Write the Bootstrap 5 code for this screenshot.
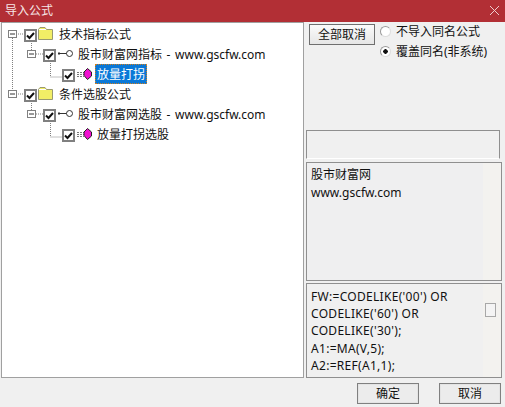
<!DOCTYPE html>
<html lang="zh"><head><meta charset="utf-8"><title>导入公式</title>
<link href="https://cdn.jsdelivr.net/npm/bootstrap@5.3.0/dist/css/bootstrap.min.css" rel="stylesheet">
<style>
html,body{height:100%;overflow:hidden}
body{background:#f0f0f0;color:#111;font:12px/18px "Noto Sans","Noto Sans CJK SC",sans-serif}
.dlg{width:505px;height:407px}
.ttl{height:22px;background:#b22f35;color:#f6e6e6;padding:0 5px}
.ttl-x{width:9px;height:9px;margin:0 1px 2px 0}
.mainrow{height:356px;padding-left:1px}
.treebox{width:303px;background:#fff;border:1px solid #a0a0a0;position:relative;padding-top:1px}
.lines{position:absolute;left:-1px;top:-23px;width:303px;height:355px;pointer-events:none}
.trow{height:20px}
.trow.l0{padding-left:22px}.trow.l1{padding-left:41px}.trow.l2{padding-left:60px}
.cb{width:13px;height:13px;border:2px solid #808080;background:#fff;flex:none;position:relative;top:5px}
.cb svg{display:block;width:9px;height:9px}
.ic{flex:none;margin-left:2px}
.ic-f{margin-top:3px;margin-left:1px}
.ic-k{margin-top:5px}
.ic-g{margin-top:4px}
.tx{white-space:nowrap;padding:0 2px;height:20px;line-height:22px;margin-left:3px;word-spacing:1.5px}
.tx.l0t{margin-left:4px}.tx.l1t{margin-left:3px}
.tx.sel{background:#0a78d7;color:#fff;outline:1px dotted #d08020;outline-offset:-1px}
.side{width:199px;padding:2px 1px 0 2px}
.btnall.btn{width:66px;height:21px;padding:0;border:1px solid #6f6f6f;border-radius:0;background:linear-gradient(#fafafa,#e6e6e6);font-size:12px;line-height:18px;color:#111;margin-left:3px}
.opts{margin-left:5px;margin-top:-2px}
.opt{height:20px}
.rd{width:11px;height:11px;border-radius:50%;background:#fff;border:1px solid #9a9a9a;border-right-color:#ddd;border-bottom-color:#ddd;margin-right:5px;flex:none;position:relative;top:-1px}
.rd.on{background:radial-gradient(circle,#111 0 2px,#fff 2.5px)}
.topz{height:103px}
.pane{border:1px solid #8f8f8f;background:#f0f0f0;position:relative}
.p1{height:29px;margin:3px 2px 3px 0;border-bottom-color:#fff}
.p2{height:119px;padding:3px 4px;background:linear-gradient(90deg,#efeff0 0 176px,#f3f2ef 176px)}
.p3{height:95px;margin-top:2px;padding:4px 4px;line-height:17.2px;letter-spacing:.3px;background:linear-gradient(90deg,#f0f0f0 0 176px,#f3f2ef 176px)}
.thumb{position:absolute;left:178px;top:19px;width:11px;height:14px;border:1px solid #a8a8a8;background:#f4f4f4}
.foot{height:29px;padding:5px 4px 0 0;gap:20px}
.foot .btn{width:62px;height:21px;padding:0;border-radius:0;border:1px solid #808080;background:#ececec;box-shadow:inset 0 0 0 1px #e4e4e4;font-size:12px;line-height:18px;color:#111}
</style></head><body>
<svg width="0" height="0" class="position-absolute">
<defs>
<symbol id="chk" viewBox="0 0 9 9"><path d="M1 4.500 3.500 7 8 2" fill="none" stroke="#111" stroke-width="2"/></symbol>
<symbol id="fold" viewBox="0 0 15 13"><path d="M.5 12.500V2.500L2 .5H7L8.500 2.500H14.500V12.500Z" fill="#f2ee66" stroke="#9a9a70"/><path d="M1 2.500H8" stroke="#fff"/></symbol>
<symbol id="key" viewBox="0 0 15 9"><path d="M0 4.500H9M1 3V6" stroke="#333" fill="none"/><circle cx="11.500" cy="4.500" r="3" fill="#fff" stroke="#333"/></symbol>
<symbol id="gem" viewBox="0 0 15 12"><path d="M0 4.500H7M0 6.500H7M0 8.500H7" stroke="#777" stroke-dasharray="2 1"/><path d="M10.500 .5 14.500 4 14.500 8 10.500 11.500 7 7.500 7 4Z" fill="#f010d0" stroke="#222"/></symbol>
</defs></svg>
<div class="dlg d-flex flex-column">
<div class="ttl d-flex align-items-center justify-content-between"><span>导入公式</span>
<svg class="ttl-x" viewBox="0 0 9 9"><path d="M0 0 9 9M9 0 0 9" stroke="#eecccc"/></svg></div>
<div class="mainrow d-flex">
<div class="treebox">
<svg class="lines" viewBox="0 0 303 355"><g fill="none" stroke="#808080" stroke-dasharray="1 1">
<path d="M11.500 38V90M30.500 43V50M35 54H43M49.500 63V77H62M15 34H24M15 94H24M30.500 103V110M35 114H43M49.500 123V137H62"/></g>
<g fill="#fff" stroke="#808080"><rect x="7.500" y="30.500" width="8" height="7"/><rect x="26.500" y="50.500" width="8" height="7"/><rect x="7.500" y="90.500" width="8" height="7"/><rect x="26.500" y="110.500" width="8" height="7"/></g>
<path d="M9 34H14M28 54H33M9 94H14M28 114H33" stroke="#333"/></svg>
<div class="trow l0 d-flex"><span class="cb"><svg><use href="#chk"/></svg></span><svg class="ic ic-f" width="15" height="13"><use href="#fold"/></svg><span class="tx l0t">技术指标公式</span></div>
<div class="trow l1 d-flex"><span class="cb"><svg><use href="#chk"/></svg></span><svg class="ic ic-k" width="15" height="9"><use href="#key"/></svg><span class="tx l1t">股市财富网指标 - www.gscfw.com</span></div>
<div class="trow l2 d-flex"><span class="cb"><svg><use href="#chk"/></svg></span><svg class="ic ic-g" width="15" height="12"><use href="#gem"/></svg><span class="tx sel">放量打拐</span></div>
<div class="trow l0 d-flex"><span class="cb"><svg><use href="#chk"/></svg></span><svg class="ic ic-f" width="15" height="13"><use href="#fold"/></svg><span class="tx l0t">条件选股公式</span></div>
<div class="trow l1 d-flex"><span class="cb"><svg><use href="#chk"/></svg></span><svg class="ic ic-k" width="15" height="9"><use href="#key"/></svg><span class="tx l1t">股市财富网选股 - www.gscfw.com</span></div>
<div class="trow l2 d-flex"><span class="cb"><svg><use href="#chk"/></svg></span><svg class="ic ic-g" width="15" height="12"><use href="#gem"/></svg><span class="tx">放量打拐选股</span></div>
</div>
<div class="side d-flex flex-column">
<div class="topz d-flex align-items-start"><button class="btn btnall" type="button">全部取消</button>
<div class="opts"><div class="opt d-flex align-items-center"><span class="rd"></span>不导入同名公式</div><div class="opt d-flex align-items-center"><span class="rd on"></span>覆盖同名(非系统)</div></div></div>
<div class="pane p1"></div>
<div class="pane p2">股市财富网<br>www.gscfw.com</div>
<div class="pane p3">FW:=CODELIKE('00') OR<br>CODELIKE('60') OR<br>CODELIKE('30');<br>A1:=MA(V,5);<br>A2:=REF(A1,1);<span class="thumb"></span></div>
</div></div>
<div class="foot d-flex justify-content-end"><button class="btn" type="button">确定</button><button class="btn" type="button">取消</button></div>
</div>
<script src="https://cdn.jsdelivr.net/npm/bootstrap@5.3.0/dist/js/bootstrap.bundle.min.js"></script>
</body></html>
